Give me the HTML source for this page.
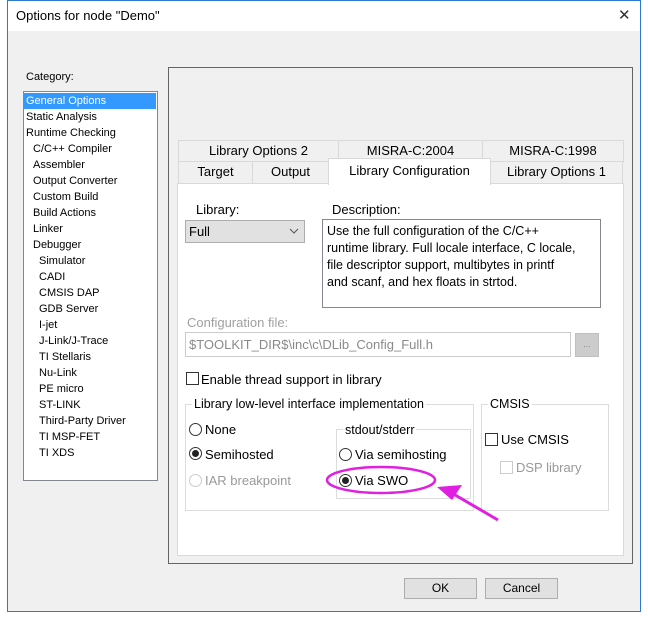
<!DOCTYPE html>
<html><head><meta charset="utf-8"><style>
*{margin:0;padding:0;box-sizing:border-box}
body{width:648px;height:619px;background:#fff;position:relative;overflow:hidden;font-family:"Liberation Sans",sans-serif;font-size:12px;color:#000}
.a{position:absolute}
.win{left:7px;top:0;width:634px;height:612px;border:1px solid #2b79d0;background:#f0f0f0}
.title{left:8px;top:1px;width:632px;height:30px;background:#fff}
.t{position:absolute;white-space:nowrap}
.list{left:23px;top:91px;width:135px;height:390px;background:#fff;border:1px solid #828790}
.list div{height:16px;line-height:16px;font-size:11px;padding-left:2px;white-space:nowrap}
.list .s{padding-left:9px}.list .ss{padding-left:15px}
.tab{position:absolute;background:#f0f0f0;border:1px solid #d9d9d9;text-align:center;font-size:13px;line-height:20px}
.grp{position:absolute;border:1px solid #dcdcdc}
.gl{position:absolute;background:#f0f0f0;padding:0 2px;font-size:12.5px;line-height:14px}
.rad{position:absolute;width:13px;height:13px;border:1px solid #333;border-radius:50%;background:#fff}
.rad.on::after{content:"";position:absolute;left:2px;top:2px;width:7px;height:7px;border-radius:50%;background:#222}
.chk{position:absolute;width:13px;height:13px;border:1px solid #333;background:#fff}
.lbl{position:absolute;font-size:13px;white-space:nowrap;line-height:15px}
.btn{position:absolute;height:21px;background:#e1e1e1;border:1px solid #adadad;text-align:center;line-height:19px;font-size:12px}
</style></head><body>
<div class="a win"></div>
<div class="a title"></div>
<div class="t" style="left:16px;top:8px;font-size:13px">Options for node "Demo"</div>
<div class="t" style="left:618px;top:6px;font-size:15px;color:#333">✕</div>
<div class="t" style="left:26px;top:71px;font-size:11px">Category:</div>
<div class="a list">
<div style="background:#3399ff;color:#fff;margin:1px 1px 0 0;height:16px">General Options</div>
<div>Static Analysis</div><div>Runtime Checking</div>
<div class="s">C/C++ Compiler</div><div class="s">Assembler</div><div class="s">Output Converter</div><div class="s">Custom Build</div><div class="s">Build Actions</div><div class="s">Linker</div><div class="s">Debugger</div>
<div class="ss">Simulator</div><div class="ss">CADI</div><div class="ss">CMSIS DAP</div><div class="ss">GDB Server</div><div class="ss">I-jet</div><div class="ss">J-Link/J-Trace</div><div class="ss">TI Stellaris</div><div class="ss">Nu-Link</div><div class="ss">PE micro</div><div class="ss">ST-LINK</div><div class="ss">Third-Party Driver</div><div class="ss">TI MSP-FET</div><div class="ss">TI XDS</div>
</div>
<div class="a" style="left:168px;top:67px;width:465px;height:497px;border:1px solid #646464"></div>
<div class="tab" style="left:178px;top:140px;width:161px;height:22px">Library Options 2</div>
<div class="tab" style="left:338px;top:140px;width:145px;height:22px">MISRA-C:2004</div>
<div class="tab" style="left:482px;top:140px;width:142px;height:22px">MISRA-C:1998</div>
<div class="tab" style="left:178px;top:161px;width:75px;height:23px">Target</div>
<div class="tab" style="left:252px;top:161px;width:77px;height:23px">Output</div>
<div class="tab" style="left:490px;top:161px;width:133px;height:23px">Library Options 1</div>
<div class="a" style="left:177px;top:183px;width:447px;height:373px;background:#fff;border:1px solid #d9d9d9"></div>
<div class="tab" style="left:328px;top:158px;width:163px;height:27px;background:#fff;border-bottom:none;line-height:24px">Library Configuration</div>
<div class="lbl" style="left:196px;top:202px">Library:</div>
<div class="a" style="left:185px;top:220px;width:120px;height:23px;background:#e1e1e1;border:1px solid #adadad"></div>
<div class="lbl" style="left:189px;top:224px">Full</div>
<svg class="a" style="left:289px;top:228px" width="10" height="6"><path d="M1 1L5 5L9 1" stroke="#555" fill="none"/></svg>
<div class="lbl" style="left:332px;top:202px">Description:</div>
<div class="a" style="left:322px;top:219px;width:279px;height:89px;border:1px solid #828790;background:#fff"></div>
<div class="lbl" style="left:327px;top:223px;line-height:17px;font-size:12.5px">Use the full configuration of the C/C++<br>runtime library. Full locale interface, C locale,<br>file descriptor support, multibytes in printf<br>and scanf, and hex floats in strtod.</div>
<div class="lbl" style="left:187px;top:315px;color:#a0a0a0">Configuration file:</div>
<div class="a" style="left:185px;top:332px;width:386px;height:25px;border:1px solid #ccc;background:#fff"></div>
<div class="lbl" style="left:189px;top:337px;color:#8a8a8a">$TOOLKIT_DIR$\inc\c\DLib_Config_Full.h</div>
<div class="a" style="left:575px;top:333px;width:24px;height:24px;background:#ccc;border:1px solid #bfbfbf;color:#888;font-size:9px;text-align:center;line-height:20px">...</div>
<div class="chk" style="left:186px;top:372px"></div>
<div class="lbl" style="left:201px;top:372px">Enable thread support in library</div>
<div class="grp" style="left:185px;top:404px;width:289px;height:107px"></div>
<div class="gl" style="left:192px;top:397px;background:#fff">Library low-level interface implementation</div>
<div class="rad" style="left:189px;top:423px"></div><div class="lbl" style="left:205px;top:422px">None</div>
<div class="rad on" style="left:189px;top:447px"></div><div class="lbl" style="left:205px;top:447px">Semihosted</div>
<div class="rad" style="left:189px;top:474px;border-color:#ccc"></div><div class="lbl" style="left:205px;top:473px;color:#999">IAR breakpoint</div>
<div class="grp" style="left:336px;top:429px;width:135px;height:70px"></div>
<div class="gl" style="left:343px;top:423px;background:#fff">stdout/stderr</div>
<div class="rad" style="left:339px;top:448px"></div><div class="lbl" style="left:355px;top:447px">Via semihosting</div>
<div class="rad on" style="left:339px;top:474px"></div><div class="lbl" style="left:355px;top:473px">Via SWO</div>
<div class="grp" style="left:481px;top:404px;width:128px;height:107px"></div>
<div class="gl" style="left:488px;top:397px;background:#fff">CMSIS</div>
<div class="chk" style="left:485px;top:433px"></div><div class="lbl" style="left:501px;top:432px">Use CMSIS</div>
<div class="chk" style="left:500px;top:461px;border-color:#ccc"></div><div class="lbl" style="left:516px;top:460px;color:#999">DSP library</div>
<svg class="a" style="left:0;top:0" width="648" height="619">
<ellipse cx="381" cy="480" rx="54" ry="13" fill="none" stroke="#e020e0" stroke-width="2.5"/>
<path d="M498 520L450 492" stroke="#e020e0" stroke-width="3"/>
<path d="M437 487L462 485L452 500Z" fill="#e020e0"/>
</svg>
<div class="btn" style="left:404px;top:578px;width:73px">OK</div>
<div class="btn" style="left:485px;top:578px;width:73px">Cancel</div>
</body></html>
